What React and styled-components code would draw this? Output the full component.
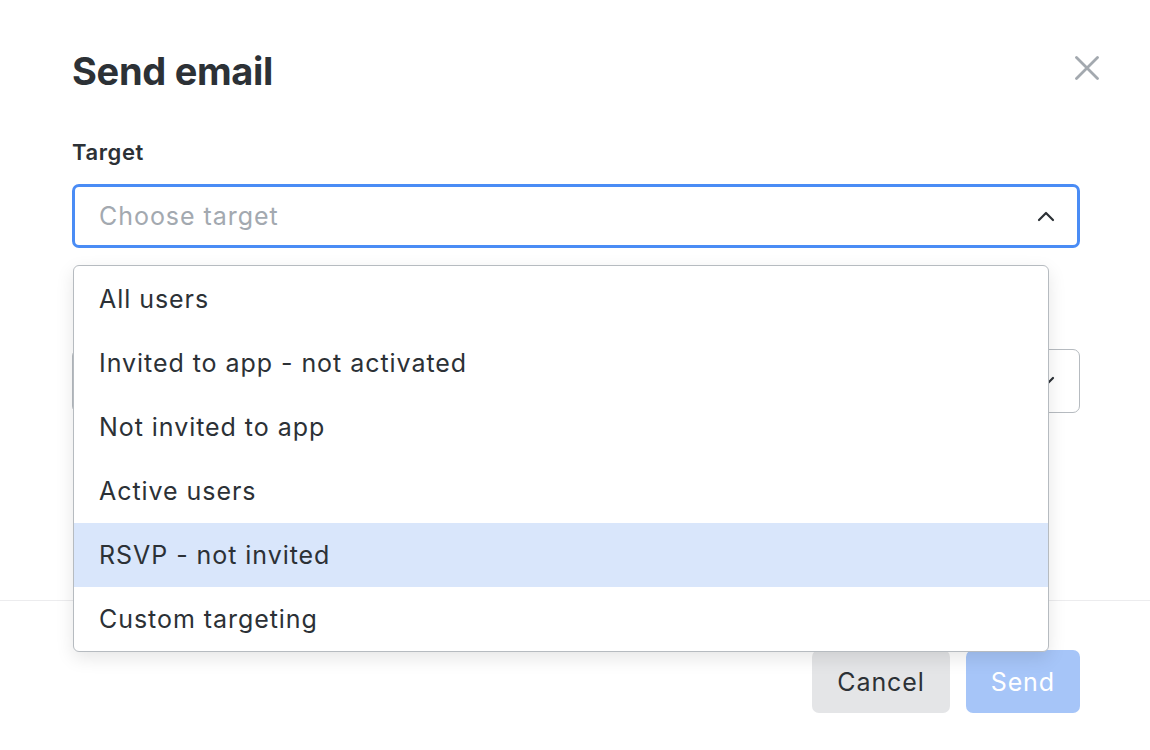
import React from "react";
import styled, { createGlobalStyle } from "styled-components";

const GlobalStyle = createGlobalStyle`
  html, body {
    margin: 0;
    padding: 0;
    background: #ffffff;
  }
  body {
    font-family: Inter, "Noto Sans", "Liberation Sans", sans-serif;
    color: #2c3136;
  }
`;

const Modal = styled.div`
  width: 1150px;
  height: 750px;
  overflow: hidden;
  background: #fff;
  display: flex;
  flex-direction: column;
`;

const Header = styled.div`
  display: flex;
  align-items: flex-start;
  justify-content: space-between;
  padding: 47px 49px 0 72px;
`;

const Title = styled.h1`
  margin: 0;
  font-size: 38px;
  line-height: 48px;
  font-weight: 700;
  letter-spacing: -0.3px;
  color: #2c3136;
`;

const CloseButton = styled.button`
  border: 0;
  background: none;
  padding: 0;
  margin-top: 7px;
  width: 28px;
  height: 28px;
  display: flex;
  align-items: center;
  justify-content: center;
  cursor: pointer;
`;

const Body = styled.div`
  padding: 0 70px 0 72px;
  height: 505px;
  box-sizing: border-box;
`;

const Field = styled.div`
  margin-top: ${(p) => p.$top}px;
  position: relative;
`;

const Label = styled.div`
  font-size: 22px;
  line-height: 28px;
  font-weight: 600;
  letter-spacing: 0.6px;
  margin-bottom: 18px;
  min-height: 28px;
`;

const SelectBox = styled.div`
  height: 64px;
  box-sizing: border-box;
  border: ${(p) => (p.$focused ? "3px solid #4a8cf5" : "1px solid #b6bbc0")};
  border-radius: 7px;
  display: flex;
  align-items: center;
  justify-content: space-between;
  padding: ${(p) => (p.$focused ? "0 22px 0 24px" : "0 24px 0 26px")};
  font-size: 25px;
  letter-spacing: 0.95px;
  color: ${(p) => (p.$placeholder ? "#a3a9b0" : "#2c3136")};
`;

const Menu = styled.ul`
  position: absolute;
  top: calc(100% + 17px);
  left: 1px;
  width: 976px;
  margin: 0;
  padding: 1px 0 0;
  list-style: none;
  background: #fff;
  border: 1px solid #b6bbc0;
  border-radius: 6px;
  box-shadow: 0 6px 18px rgba(0, 0, 0, 0.1);
  z-index: 10;
  box-sizing: border-box;
`;

const Option = styled.li`
  height: 64px;
  display: flex;
  align-items: center;
  padding: 0 25px;
  font-size: 25px;
  letter-spacing: 0.95px;
  color: #2c3136;
  background: ${(p) => (p.$active ? "#d9e6fb" : "transparent")};
`;

const Footer = styled.div`
  border-top: 1px solid #ececee;
  display: flex;
  justify-content: flex-end;
  gap: 16px;
  padding: 49px 70px 0 0;
`;

const Button = styled.button`
  height: 63px;
  padding: 0 ${(p) => (p.$primary ? "25px" : "25px")};
  border: 0;
  border-radius: 7px;
  font-family: inherit;
  font-size: 25px;
  letter-spacing: 0.9px;
  background: ${(p) => (p.$primary ? "#a6c5f8" : "#e4e5e7")};
  color: ${(p) => (p.$primary ? "#ffffff" : "#2c3136")};
`;

const Chevron = ({ up }) => (
  <svg width="18" height="11" viewBox="0 0 18 11" fill="none">
    <path
      d={up ? "M2 9L9 2L16 9" : "M2 2L9 9L16 2"}
      stroke="#2c3136"
      strokeWidth="2.2"
      strokeLinecap="round"
      strokeLinejoin="round"
    />
  </svg>
);

const options = [
  "All users",
  "Invited to app - not activated",
  "Not invited to app",
  "Active users",
  "RSVP - not invited",
  "Custom targeting",
];

export default function App() {
  return (
    <>
      <GlobalStyle />
      <Modal>
        <Header>
          <Title>Send email</Title>
          <CloseButton aria-label="Close">
            <svg width="24" height="24" viewBox="0 0 24 24">
              <path
                d="M1.5 1.5L22.5 22.5M22.5 1.5L1.5 22.5"
                stroke="#a3a9af"
                strokeWidth="2.8"
                strokeLinecap="round"
              />
            </svg>
          </CloseButton>
        </Header>
        <Body>
          <Field $top={43}>
            <Label>Target</Label>
            <SelectBox $focused $placeholder>
              <span>Choose target</span>
              <Chevron up />
            </SelectBox>
            <Menu>
              {options.map((o) => (
                <Option key={o} $active={o === "RSVP - not invited"}>
                  {o}
                </Option>
              ))}
            </Menu>
          </Field>
          <Field $top={55}>
            <Label />
            <SelectBox>
              <span />
              <Chevron />
            </SelectBox>
          </Field>
        </Body>
        <Footer>
          <Button>Cancel</Button>
          <Button $primary>Send</Button>
        </Footer>
      </Modal>
    </>
  );
}
